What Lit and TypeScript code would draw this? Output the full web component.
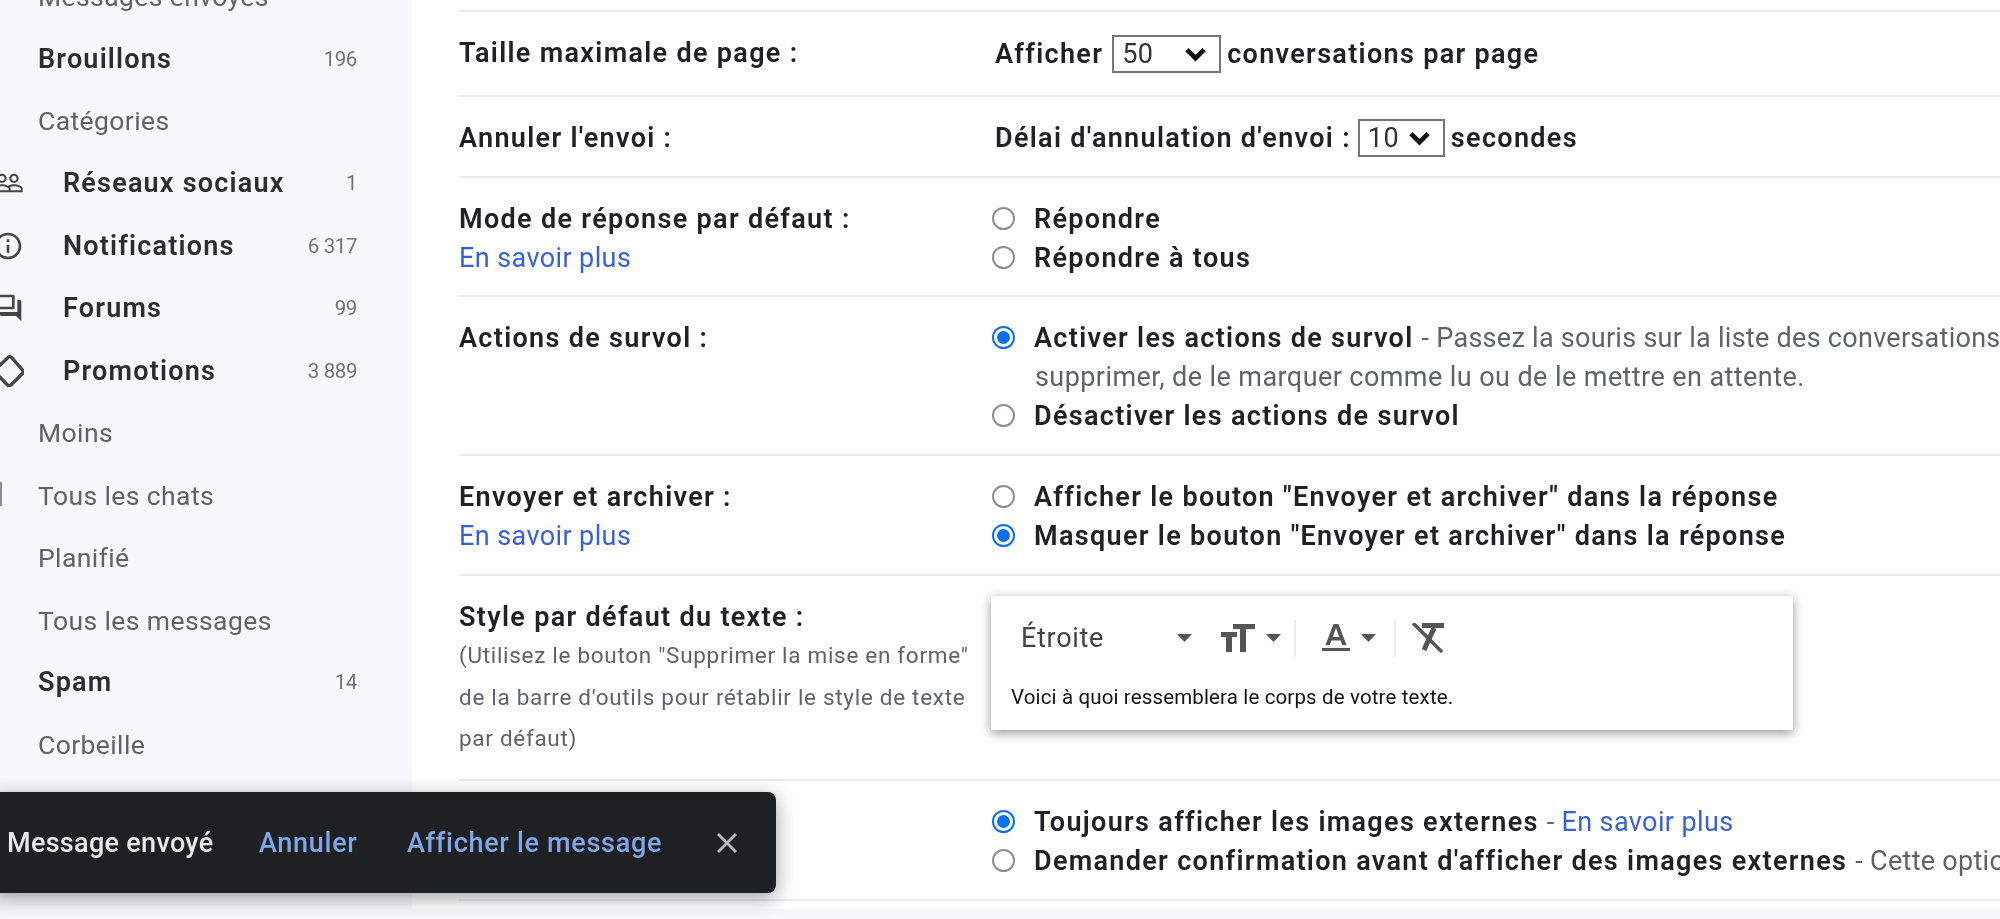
import { LitElement, html, css, svg } from "lit";
import { customElement } from "lit/decorators.js";

const icons: Record<string, unknown> = {
  people: svg`<path d="M16.5 13c-1.2 0-3.07.34-4.5 1-1.43-.67-3.3-1-4.5-1C5.33 13 1 14.08 1 16.25V19h22v-2.75c0-2.17-4.33-3.25-6.5-3.25zm-4 4.5h-10v-1.25c0-.54 2.56-1.75 5-1.75s5 1.21 5 1.75v1.25zm9 0H14v-1.25c0-.46-.2-.86-.52-1.22.88-.3 1.96-.53 3.02-.53 2.44 0 5 1.21 5 1.75v1.25zM7.5 12c1.93 0 3.5-1.57 3.5-3.5S9.43 5 7.5 5 4 6.57 4 8.5 5.57 12 7.5 12zm0-5.5c1.1 0 2 .9 2 2s-.9 2-2 2-2-.9-2-2 .9-2 2-2zm9 5.5c1.93 0 3.5-1.57 3.5-3.5S18.43 5 16.5 5 13 6.57 13 8.5s1.57 3.5 3.5 3.5zm0-5.5c1.1 0 2 .9 2 2s-.9 2-2 2-2-.9-2-2 .9-2 2-2z"/>`,
  info: svg`<path d="M11 7h2v2h-2zm0 4h2v6h-2zm1-9C6.48 2 2 6.48 2 12s4.48 10 10 10 10-4.48 10-10S17.52 2 12 2zm0 18c-4.41 0-8-3.59-8-8s3.59-8 8-8 8 3.59 8 8-3.59 8-8 8z"/>`,
  forum: svg`<path d="M15 4v7H5.17l-.59.59-.58.58V4h11m1-2H3c-.55 0-1 .45-1 1v14l4-4h10c.55 0 1-.45 1-1V3c0-.55-.45-1-1-1zm5 4h-2v9H6v2c0 .55.45 1 1 1h11l4 4V7c0-.55-.45-1-1-1z"/>`,
  tag: svg`<path transform="scale(.75)" fill="none" stroke="#444746" stroke-width="3.4" d="M2 16 L16 2.5 Q18 1 19.5 2.5 L30.5 15 Q32 17 30.5 18.5 L19 30 Q17 31.5 15.5 30 L2 16z"/>`,
};

type NavItem = { t: string; n?: string; bold?: boolean; icon?: string; cut?: boolean };
const nav: NavItem[] = [
  { t: "Messages envoyés" },
  { t: "Brouillons", n: "196", bold: true },
  { t: "Catégories" },
  { t: "Réseaux sociaux", n: "1", bold: true, icon: "people" },
  { t: "Notifications", n: "6 317", bold: true, icon: "info" },
  { t: "Forums", n: "99", bold: true, icon: "forum" },
  { t: "Promotions", n: "3 889", bold: true, icon: "tag" },
  { t: "Moins" },
  { t: "Tous les chats", cut: true },
  { t: "Planifié" },
  { t: "Tous les messages" },
  { t: "Spam", n: "14", bold: true },
  { t: "Corbeille" },
];

@customElement("app-root")
export class AppRoot extends LitElement {
  static styles = css`
    :host { display: block; width: 2000px; height: 919px; overflow: hidden; background: #fff; font-family: Roboto, "Liberation Sans", sans-serif; color: #202124; }
    .page { display: flex; width: 2000px; height: 919px; position: relative; overflow: hidden; filter: blur(0.55px); }
    .side { flex: 0 0 412px; background: #f6f8fc; height: 919px; overflow: hidden; }
    .nav { margin-top: -35px; display: flex; flex-direction: column; }
    .item { height: 62.4px; flex: none; display: flex; align-items: center; padding: 0 55px 0 38px; font-size: 26.5px; color: #5f6368; position: relative; letter-spacing: 0.4px; }
    .item.bold { font-weight: 600; color: #2c2d30; font-size: 27px; letter-spacing: 1.2px; }
    .item.child { padding-left: 0; gap: 39px; }
    .item .ic { width: 32px; height: 32px; flex: none; fill: #444746; margin-left: -8px; }
    .item .label { flex: 1; }
    .item .n { font-size: 20.5px; font-weight: 400; color: #6f7378; letter-spacing: -0.4px; }
    .cut { position: absolute; left: 0; top: 18px; width: 2px; height: 24px; background: #8d8f92; }

    .main { flex: 1; min-width: 0; display: flex; flex-direction: column; overflow: hidden; padding-left: 47px; }
    .rows { margin-top: 10px; display: grid; grid-template-rows: 85px 81px 119px 159px 120px 205px 120px; border-bottom: 2px solid #e8eaed; }
    .row { display: grid; grid-template-columns: 533px 1fr; border-top: 2px solid #e8eaed; padding-top: 21.5px; font-size: 27px; line-height: 39px; font-weight: 600; letter-spacing: 1.32px; min-width: 0; overflow: hidden; }
    .k { color: #202124; white-space: nowrap; }
    .v { min-width: 0; white-space: nowrap; overflow: hidden; }
    .v.open { overflow: visible; }
    a { color: #3860d8; font-weight: 400; text-decoration: none; letter-spacing: 0.4px; }
    .sub { display: block; font-size: 22.5px; font-weight: 400; line-height: 41.5px; color: #5f6368; letter-spacing: 0.7px; white-space: normal; width: 520px; margin-top: -1.5px; }
    .inline { display: flex; align-items: center; height: 39px; padding-left: 3px; }
    .inline.low { margin-top: 1px; }
    .sel { display: inline-flex; align-items: center; justify-content: space-between; height: 38px; box-sizing: border-box; border: 2px solid #767676; margin: 0 6px 0 9px; padding: 0 12px 0 8px; font-weight: 400; color: #333; letter-spacing: 0.4px; }
    .sel.a { width: 109px; }
    .sel.b { width: 87px; margin-left: 7px; }
    .sel svg { width: 23px; height: 15px; fill: none; stroke: #111; stroke-width: 4.4; }
    .opt { display: flex; align-items: center; height: 39px; gap: 19px; }
    .cont { padding-left: 43px; height: 39px; display: flex; align-items: center; font-weight: 400; color: #5f6368; letter-spacing: 0.42px; }
    .radio { width: 23px; height: 23px; box-sizing: border-box; border: 2px solid #8c8f92; border-radius: 50%; flex: none; margin-bottom: 2px; background: #fff; }
    .radio.on { border-color: #0b6ff2; position: relative; }
    .radio.on::after { content: ""; position: absolute; inset: 3px; border-radius: 50%; background: #0b6ff2; }
    .desc { font-weight: 400; color: #5f6368; letter-spacing: 0.28px; }

    .card { margin: -1.5px 0 0 -1px; width: 802px; height: 134px; box-sizing: border-box; box-shadow: 0 3px 10px rgba(0,0,0,.42); background: #fff; display: flex; flex-direction: column; padding: 0 20px; }
    .bar { height: 84px; display: flex; align-items: center; padding: 0 0 0 10px; font-weight: 400; color: #444; font-size: 27px; letter-spacing: 0.7px; }
    .font { width: 156px; }
    .tri { width: 15px; height: 8px; background: #555; clip-path: polygon(0 0, 100% 0, 50% 100%); flex: none; }
    .bar svg { fill: #555; stroke: #555; flex: none; }
    .div { width: 2px; height: 37px; background: #ececec; flex: none; }
    .sample { font-size: 20.5px; font-weight: 400; line-height: 24px; color: #111; letter-spacing: 0.14px; margin-top: 5px; }
    .m-tt { margin-left: 29px; }
    .m-t2 { margin-left: 10px; }
    .m-d1 { margin-left: 13px; }
    .m-a { margin-left: 26px; }
    .m-t3 { margin-left: 11px; }
    .m-d2 { margin-left: 18px; }
    .m-x { margin-left: 16px; }

    .bottom { flex: 1; background: #f6f8fc; margin: 8px 0 0 -47px; }

    .toast { position: absolute; left: -10px; top: 792px; width: 786px; height: 101px; background: #1f2023; border-radius: 8px; box-shadow: 0 5px 20px rgba(0,0,0,.38); display: flex; align-items: center; padding-left: 17px; box-sizing: border-box; font-size: 27px; color: #e8eaed; }
    .toast .m { width: 252px; letter-spacing: 0.3px; font-weight: 500; }
    .toast .l { color: #7fa6e6; font-weight: 500; letter-spacing: 0.7px; }
    .toast .l1 { width: 148px; }
    .toast .l2 { width: 307px; }
    .toast svg { width: 26px; height: 26px; stroke: #b9bbbe; stroke-width: 2.8; fill: none; }
  `;

  private radio(on = false) {
    return html`<span class="radio ${on ? "on" : ""}"></span>`;
  }

  private chevron() {
    return html`<svg viewBox="0 0 20 14"><path d="M2 2.5l8 8 8-8"/></svg>`;
  }

  render() {
    return html`<div class="page">
      <aside class="side"><div class="nav">
        ${nav.map((i) => html`<div class="item ${i.bold ? "bold" : ""} ${i.icon ? "child" : ""}">
          ${i.icon ? html`<svg class="ic" viewBox="0 0 24 24">${icons[i.icon]}</svg>` : ""}
          ${i.cut ? html`<span class="cut"></span>` : ""}
          <span class="label">${i.t}</span>${i.n ? html`<span class="n">${i.n}</span>` : ""}
        </div>`)}
      </div></aside>
      <main class="main">
        <div class="rows">
          <div class="row"><div class="k">Taille maximale de page :</div>
            <div class="v"><div class="inline low">Afficher<span class="sel a">50 ${this.chevron()}</span>conversations par page</div></div></div>
          <div class="row"><div class="k">Annuler l'envoi :</div>
            <div class="v"><div class="inline">Délai d'annulation d'envoi :<span class="sel b">10 ${this.chevron()}</span>secondes</div></div></div>
          <div class="row"><div class="k">Mode de réponse par défaut :<br><a href="#">En savoir plus</a></div>
            <div class="v"><div class="opt">${this.radio()}Répondre</div><div class="opt">${this.radio()}Répondre à tous</div></div></div>
          <div class="row"><div class="k">Actions de survol :</div>
            <div class="v"><div class="opt">${this.radio(true)}<span>Activer les actions de survol <span class="desc">- Passez la souris sur la liste des conversations</span></span></div>
              <div class="cont">supprimer, de le marquer comme lu ou de le mettre en attente.</div>
              <div class="opt">${this.radio()}Désactiver les actions de survol</div></div></div>
          <div class="row"><div class="k">Envoyer et archiver :<br><a href="#">En savoir plus</a></div>
            <div class="v"><div class="opt">${this.radio()}Afficher le bouton "Envoyer et archiver" dans la réponse</div><div class="opt">${this.radio(true)}Masquer le bouton "Envoyer et archiver" dans la réponse</div></div></div>
          <div class="row"><div class="k">Style par défaut du texte :<span class="sub">(Utilisez le bouton "Supprimer la mise en forme" de la barre d'outils pour rétablir le style de texte par défaut)</span></div>
            <div class="v open">
              <div class="card">
                <div class="bar">
                  <span class="font">Étroite</span><span class="tri"></span>
                  <svg class="m-tt" width="35" height="28" viewBox="0 0 35 28"><g stroke="none"><rect x="0" y="8" width="16" height="5"/><rect x="5" y="8" width="6" height="20"/><rect x="12" y="0" width="22" height="5"/><rect x="19" y="0" width="6" height="28"/></g></svg>
                  <span class="tri m-t2"></span>
                  <span class="div m-d1"></span>
                  <svg class="m-a" width="28" height="28" viewBox="0 0 28 28" stroke="none"><path stroke="none" d="M11.5 0h5l8 21h-4.3l-1.6-4.6H9.4L7.8 21H3.500zM10.700 13h6.600L14 4z"/><rect stroke="none" x="0" y="24" width="28" height="3"/></svg>
                  <span class="tri m-t3"></span>
                  <span class="div m-d2"></span>
                  <svg class="m-x" width="32" height="30" viewBox="0 0 32 30"><g stroke="none"><rect x="10" y="0" width="22" height="5"/></g><path fill="none" stroke-width="3.4" d="M1 0l29 29"/><path fill="none" stroke-width="5" d="M22 5L12 27"/></svg>
                </div>
                <div class="sample">Voici à quoi ressemblera le corps de votre texte.</div>
              </div>
            </div></div>
          <div class="row"><div class="k"></div>
            <div class="v"><div class="opt">${this.radio(true)}<span>Toujours afficher les images externes <span class="desc">- </span><a href="#">En savoir plus</a></span></div>
              <div class="opt">${this.radio()}<span>Demander confirmation avant d'afficher des images externes <span class="desc">- Cette option</span></span></div></div></div>
        </div>
        <div class="bottom"></div>
      </main>
      <div class="toast">
        <span class="m">Message envoyé</span>
        <span class="l l1">Annuler</span>
        <span class="l l2">Afficher le message</span>
        <svg viewBox="0 0 26 26"><path d="M4 4l18 18M22 4L4 22"/></svg>
      </div>
    </div>`;
  }
}
